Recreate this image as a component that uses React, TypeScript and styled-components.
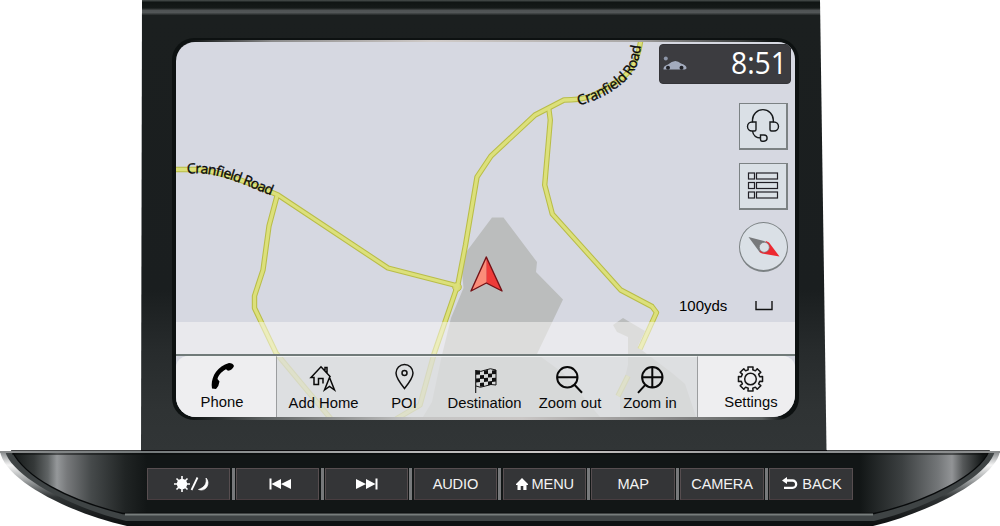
import React from "react";
import styled, { createGlobalStyle } from "styled-components";

const GlobalStyle = createGlobalStyle`
  body { margin: 0; background: #fff; font-family: "Liberation Sans", Arial, sans-serif; overflow: hidden; }
  *, *::before { box-sizing: border-box; }
  svg { display: block; }
`;

const Device = styled.main`
  width: 1000px;
  height: 526px;
  display: grid;
  grid-template-rows: 450px 76px;
`;

const Housing = styled.section`
  width: 686px;
  margin-left: 141px;
  padding: 38px 28px 0 31px;
  clip-path: polygon(1px 0, 679px 0, 685.5px 450px, 0 450px);
  background: linear-gradient(
    #4c5250 0, #2a302f 1.2px, #101514 2.5px, #151a19 8px, #4f5354 10.5px,
    #525657 12.5px, #1b1f1f 15.5px, #1a1e1f 290px, #272b2c 350px, #2f3334 410px, #313536 450px
  );
`;

const Bezel = styled.div`
  width: 627px;
  padding: 4px;
  height: 382px;
  border-radius: 22px;
  background:
    linear-gradient(90deg, transparent 18px, #8b8b8b 100px, #d0cbc8 260px, #aaa8a7 460px, #3a3d3d 570px, transparent 600px) 0 1.5px / 100% 2.5px no-repeat,
    linear-gradient(90deg, transparent 18px, #5c6060 90px, #c4c4c4 240px, #c9c6c5 350px, #888 500px, #5c6060 590px, transparent 612px) 0 378.5px / 100% 3px no-repeat,
    #0d1111;
`;

const Screen = styled.div`
  width: 619px;
  height: 375px;
  display: grid;
  border-radius: 19px 17px 22px 20px;
  overflow: hidden;
  background: #d6d8e1;
`;

const MapLayer = styled.svg`
  grid-area: 1 / 1;
`;

const Overlay = styled.div`
  grid-area: 1 / 1;
  z-index: 1;
  display: grid;
  grid-template-rows: 280px 32px 63px;
`;

const Controls = styled.div`
  display: flex;
  flex-direction: column;
  align-items: flex-end;
  padding: 2px 7px 0 0;
`;

const StatusBar = styled.div`
  width: 132px;
  height: 40px;
  margin-right: -3px;
  padding: 0 3px;
  display: flex;
  align-items: center;
  justify-content: space-between;
  border-radius: 4px;
  background: #3c3c40;
  border: 1px solid #343438;
`;

const MapButton = styled.div<{ $round?: boolean; $top: number; $h: number }>`
  width: 49px;
  height: ${(p) => p.$h}px;
  margin-top: ${(p) => p.$top}px;
  display: grid;
  place-items: center;
  background: #dae0e6;
  border: 1px solid #7c8284;
  border-right-width: ${(p) => (p.$round ? 1 : 2)}px;
  border-bottom-width: 2px;
  border-radius: ${(p) => (p.$round ? "50%" : "0")};
`;

const Scale = styled.div`
  width: 94px;
  margin: 24px 15px 0 0;
  display: flex;
  justify-content: space-between;
  align-items: center;
  font-size: 15px;
  line-height: 20px;
`;

const Haze = styled.div`
  background: rgba(251, 250, 247, 0.52);
`;

const NavBar = styled.nav`
  display: grid;
  grid-template-columns: 101px 93px 68px 93px 78px 88px 98px;
  border-top: 2px solid #707a79;
`;

const NavItem = styled.div<{ $edge?: "left" | "right"; $dx?: number }>`
  display: flex;
  flex-direction: column;
  align-items: center;
  padding: ${(p) => (p.$edge ? 4 : 5)}px ${(p) => (p.$dx && p.$dx < 0 ? -p.$dx : 0)}px 0 ${(p) => (p.$dx && p.$dx > 0 ? p.$dx : 0)}px;
  font-size: 14.8px;
  line-height: 18px;
  color: #080808;
  white-space: nowrap;
  background: ${(p) => (p.$edge ? "#eeeef0" : "rgba(223, 224, 224, 0.78)")};
  border-top: 1px solid #f0f2f2;
  border-right: ${(p) => (p.$edge === "left" ? "1.5px solid #9b9d9f" : "0")};
  border-left: ${(p) => (p.$edge === "right" ? "1.5px solid #9b9d9f" : "0")};
  border-radius: ${(p) => (p.$edge === "left" ? "12px 0 0 0" : p.$edge === "right" ? "0 12px 0 0" : "0")};
  svg { height: 32px; width: 40px; flex: none; overflow: visible; }
`;

const Base = styled.section`
  display: grid;
`;

const BaseShape = styled.svg`
  grid-area: 1 / 1;
`;

const KeyRow = styled.div`
  grid-area: 1 / 1;
  z-index: 1;
  display: flex;
  gap: 1.25px;
  padding: 18px 0 0 147px;
  align-self: start;
`;

const Key = styled.div<{ $shift?: number }>`
  width: 83.4px;
  height: 32px;
  flex: none;
  display: flex;
  align-items: center;
  justify-content: center;
  gap: 4px;
  padding-left: ${(p) => p.$shift ?? 0}px;
  font-size: 14.6px;
  color: #f3f3f3;
  white-space: nowrap;
  background: #343537;
  border: 1px solid #574e50;
  border-bottom-color: #483d40;
`;

const KeyText = styled.span`
  display: inline-block;
  letter-spacing: -0.15px;
`;

const Divider = styled.div`
  width: 3px;
  height: 32px;
  flex: none;
  background: #77797b;
`;

const roads = [
  "M170 169.5H198Q225 172 278 195L388 268L458 286",
  "M277 196L269 226L263 270L254.500 296V308L276 353L331 419",
  "M641 38C638 66 626 78 611 85C594 96 586 100 564 100L535 115L491 156L477 177L465.500 245L458 284L456 290L434 354L420 405L396 419",
  "M548.700 108L550.300 120L544.700 185L552.300 214L620.700 290L652 306.500L656.500 312.500L640 349",
  "M628 376L618 396",
];

const RoadMap = () => (
  <MapLayer width="619" height="375" viewBox="176 42 619 375" fill="none">
    <g fill="#bbbdbd">
      <path d="M492 217.500H503.500L537 262L536 272L563 299.500L537 354L563 373L600 417H423L432 402L442 355L451 318L463.500 288L461 259Z" />
      <path d="M613 325L623 318L645 331L638 346L643 351L672 373L685 384L696 417H620V398L628 365V337L617 332Z" />
    </g>
    <g stroke="#b9bd48" strokeWidth="5.400" strokeLinejoin="round">
      {roads.map((d) => <path key={d} d={d} />)}
    </g>
    <circle cx="457" cy="287" r="4.300" fill="#d9dc75" stroke="#b9bd48" />
    <g stroke="#dce07b" strokeWidth="3.300" strokeLinejoin="round">
      {roads.map((d) => <path key={d} d={d} />)}
    </g>
    <defs>
      <path id="west" d="M187 173.500C206 172 222 176 240 183L300 207" />
      <path id="north" d="M578.500 105.500C600 99.500 613 92 625 81C637 72 640.500 59 642 30" />
    </defs>
    <g fill="#090909" stroke="#090909" strokeWidth=".35" fontFamily="'Open Sans', 'Noto Sans', sans-serif" fontSize="14">
      <text><textPath href="#west" textLength="88" lengthAdjust="spacing">Cranfield Road</textPath></text>
      <text><textPath href="#north" textLength="93" lengthAdjust="spacing">Cranfield Road</textPath></text>
    </g>
    <g strokeLinejoin="round">
      <path d="M486.300 257L471 291L486.300 283Z" fill="#fb8d79" />
      <path d="M486.300 257L502 291L486.300 283Z" fill="#ef3b39" />
      <path d="M486.300 257L471 291L486.300 283L502 291Z" stroke="#741116" strokeWidth="1.400" />
    </g>
  </MapLayer>
);

const CarIcon = () => (
  <svg width="24" height="20" viewBox="0 0 24 20">
    <circle cx="2.800" cy="4.500" r="2" fill="#8d96a8" />
    <path d="M.5 15.500Q0 12 5 10.500Q12 4 18 9.500Q24 11.500 23.500 14.500L22 15.500Z" fill="#a3abbd" />
    <circle cx="5" cy="13.800" r="2" fill="#202126" />
    <circle cx="18.500" cy="13.800" r="2" fill="#202126" />
  </svg>
);

const Clock = () => (
  <svg width="58" height="38" viewBox="0 0 58 38" overflow="visible">
    <text x="2" y="29" textLength="56" lengthAdjust="spacingAndGlyphs" fill="#fff" fontFamily="'Open Sans', 'Noto Sans', sans-serif" fontSize="30.500">8:51</text>
  </svg>
);

const HeadsetIcon = () => (
  <svg width="34" height="36" viewBox="0 0 34 36" fill="none" stroke="#171a1c" strokeWidth="1.400">
    <path d="M6.500 14.500V12A10.400 10.400 0 0 1 27.300 12V14.500" />
    <path d="M10 14H6A4.500 4.500 0 0 0 6 23H8.500Q10 23 10 21.500ZM24 14H28A4.500 4.500 0 0 1 28 23H25.500Q24 23 24 21.500Z" />
    <path d="M6.500 23Q7.500 30 15 30M14.500 27H18A3 3 0 0 1 18 33.200H16Q14.500 33 14.500 31.500Z" />
  </svg>
);

const ListIcon = () => (
  <svg width="32" height="28" viewBox="0 0 32 28" fill="none" stroke="#211f26" strokeWidth="1.200">
    {[1, 10.5, 20].map((y) => (
      <g key={y}><rect x="1.500" y={y} width="6" height="6" /><rect x="9.500" y={y} width="21" height="6" /></g>
    ))}
  </svg>
);

const CompassIcon = () => (
  <svg width="34" height="24" viewBox="0 0 34 24">
    <path d="M1.500 2L17 6L21 8.500L15 18L12.500 17Z" fill="#77797b" />
    <path d="M32.500 21.500L15 18.500L12.500 17L19 6L22 7.500Z" fill="#ed2830" />
    <circle cx="17.300" cy="12.300" r="5" fill="#dae0e6" stroke="#77797b" strokeWidth=".7" />
  </svg>
);

const PhoneIcon = () => (
  <svg viewBox="0 0 40 32">
    <path d="M10 27.500C8.500 18.500 13 8 23 3.500L27 2Q31 2 32 5Q30.500 9 26 9.800L24 8.200C19 11 16.500 14 15.500 18L17.500 20.500Q17 25 14 28Z" fill="#000" />
  </svg>
);

const HomeIcon = () => (
  <svg viewBox="0 0 40 32" fill="none" stroke="#090909" strokeWidth="1.500">
    <path d="M19 21.500V16.500H14.500V22.500H10V15.500H7L17 4.800L26.500 15M21 8.500V5.500H23V11" />
    <path d="M25.500 15.500L20.500 28L25.500 24.500L30.500 28Z" />
  </svg>
);

const PinIcon = () => (
  <svg viewBox="0 0 40 32" fill="none" stroke="#111" strokeWidth="1.500">
    <path d="M20.500 26.500Q12 16 12 11A8.500 8.500 0 0 1 29 11Q29 16 20.500 26.500Z" />
    <circle cx="20.500" cy="11" r="2.500" />
  </svg>
);

const flagCells = Array.from({ length: 20 }, (_, i) => ({ c: i % 5, r: Math.floor(i / 5) }));

const FlagIcon = () => (
  <svg viewBox="0 0 40 32" fill="none" stroke="#151515">
    <g fill="#111" stroke="none">
      {flagCells.filter(({ c, r }) => (c + r) % 2 === 0).map(({ c, r }) => (
        <path key={`${c}-${r}`} d={`M${11 + c * 4} ${9 + r * 3.8 + [0, 0.5, -0.5, -1, -0.5][c]}l4 -.400v3.800l-4 .400z`} />
      ))}
    </g>
    <path d="M11 8.500Q16 10.500 20.500 8T31 8V23Q26 21.500 20.500 24T11 24" />
    <path d="M10.700 8V31" strokeWidth="1.100" />
  </svg>
);

const ZoomIcon = ({ plus = false }: { plus?: boolean }) => (
  <svg viewBox="0 0 40 32" fill="none" stroke="#080808" strokeWidth="2">
    {plus ? (
      <path d="M32.500 15.300A10.200 10.200 0 1 1 12.100 15.300A10.200 10.200 0 1 1 32.500 15.300M15.300 22.800L8 30.800M12.500 15.300H32.500M22.300 5.300V25.300" />
    ) : (
      <path d="M27.500 15.300A10.200 10.200 0 1 1 7.100 15.300A10.200 10.200 0 1 1 27.500 15.300M24.500 22.800L32 30.800M7.500 15.300H27.500" />
    )}
  </svg>
);

const teeth = Array.from({ length: 8 }, (_, i) => {
  const at = (deg: number, r: number) => {
    const a = ((i * 45 + deg) * Math.PI) / 180;
    return `${(19.5 + r * Math.cos(a)).toFixed(2)} ${(18 + r * Math.sin(a)).toFixed(2)}`;
  };
  return `${at(-14, 9.5)}L${at(-12, 12.3)}L${at(12, 12.3)}L${at(14, 9.5)}`;
});

const GearIcon = () => (
  <svg viewBox="0 0 40 32" fill="none" stroke="#161616" strokeWidth="1.500" strokeLinejoin="round">
    <path d={`M${teeth.join("L")}Z`} />
    <circle cx="19.500" cy="18" r="5.800" />
  </svg>
);

const DayNightIcon = () => (
  <svg width="37" height="18" viewBox="0 0 37 18" fill="#fff" stroke="#fff">
    <circle cx="9" cy="9" r="5.200" stroke="none" />
    <path d="M9 1V17M1 9H17M3.500 3.500L14.500 14.500M14.500 3.500L3.500 14.500" strokeWidth="1.600" />
    <path d="M18.500 15L24.500 2.500" strokeWidth="1.800" />
    <path d="M33 3C38 8 33 17.500 25.500 14.500C32 12.500 34 8 33 3Z" strokeWidth=".7" />
  </svg>
);

const SkipIcon = ({ forward = false }: { forward?: boolean }) => (
  <svg width="22" height="12" viewBox="0 0 22 12" fill="#fff">
    <path d={forward ? "M0 1L10 6L0 11ZM10 1L19.500 6L10 11ZM19.500 .5H21.500V11.500H19.500Z" : "M22 1L12 6L22 11ZM12 1L2.500 6L12 11ZM.5 .5H2.500V11.500H.5Z"} />
  </svg>
);

const HouseGlyph = () => (
  <svg width="12" height="12" viewBox="0 0 12 12" fill="#fff">
    <path d="M6 0L12 6V7H10.500V12H7.300V8H4.700V12H1.500V7H0V6L6 0Z" />
  </svg>
);

const BackGlyph = () => (
  <svg width="16" height="14" viewBox="0 0 16 14" fill="none">
    <path d="M4 3.500H10.500A3.600 3.600 0 0 1 10.500 10.800H2" stroke="#fff" strokeWidth="2.300" />
    <path d="M0 3.500L5 0V7Z" fill="#fff" />
  </svg>
);

const Console = () => (
  <BaseShape width="1000" height="76" viewBox="0 450 1000 76">
    <defs>
      <linearGradient id="gloss" gradientUnits="userSpaceOnUse" x1="0" y1="0" x2="1000" y2="0">
        <stop offset=".012" stopColor="#121616" />
        <stop offset=".034" stopColor="#353939" />
        <stop offset=".048" stopColor="#606465" />
        <stop offset=".057" stopColor="#95989a" />
        <stop offset=".067" stopColor="#77797b" />
        <stop offset=".091" stopColor="#464a4b" />
        <stop offset=".125" stopColor="#202424" />
        <stop offset=".147" stopColor="#121616" />
        <stop offset=".86" stopColor="#121616" />
        <stop offset=".902" stopColor="#3c4041" />
        <stop offset=".938" stopColor="#737678" />
        <stop offset=".952" stopColor="#929496" />
        <stop offset=".963" stopColor="#555859" />
        <stop offset=".983" stopColor="#121616" />
      </linearGradient>
      <linearGradient id="rim" gradientUnits="userSpaceOnUse" x1="0" y1="450" x2="0" y2="526">
        <stop offset="0" stopColor="#777b7d" />
        <stop offset=".2" stopColor="#f5f5f5" />
        <stop offset=".4" stopColor="#a1a4a5" />
        <stop offset=".62" stopColor="#303435" />
        <stop offset="1" stopColor="#0c0e0f" />
      </linearGradient>
      <linearGradient id="edge" x1="0" x2="1">
        <stop offset="0" stopColor="#8b8d8e" />
        <stop offset=".15" stopColor="#74797a" />
        <stop offset=".42" stopColor="#b9b8b8" />
        <stop offset=".55" stopColor="#cbc6c5" />
        <stop offset=".8" stopColor="#8d8f90" />
        <stop offset="1" stopColor="#8b8d8e" />
      </linearGradient>
    </defs>
    <path d="M141 449H827V452H141Z" fill="#1d1719" />
    <path d="M0 451H1000C996 478 931 512 873 526H127C69 513 4 480 0 451Z" fill="url(#rim)" />
    <path d="M5 451H995C988 477 928 508 874 521H126C72 508 12 477 5 451Z" fill="#3f4445" />
    <path d="M125 521H875L858 526H142Z" fill="#0e1112" />
    <path d="M12 451H989C979 475 927 502 874 513.500H123C67 500 25 477 12 451Z" fill="url(#gloss)" stroke="#080a0b" strokeWidth="1.300" />
    <path d="M125 514.500H873" stroke="#777d7c" strokeWidth="2" />
    <rect y="451" width="1000" height="2" fill="url(#edge)" />
    <path d="M12 454H988" stroke="#090b0b" strokeWidth="1" />
  </BaseShape>
);

const keys: { label: React.ReactNode; shift?: number }[] = [
  { label: <DayNightIcon />, shift: 5 },
  { label: <SkipIcon />, shift: 4 },
  { label: <SkipIcon forward />, shift: 2 },
  { label: <KeyText>AUDIO</KeyText> },
  { label: <><HouseGlyph /><KeyText>MENU</KeyText></>, shift: 1 },
  { label: <KeyText>MAP</KeyText> },
  { label: <KeyText>CAMERA</KeyText> },
  { label: <><BackGlyph /><KeyText>BACK</KeyText></>, shift: 2 },
];

export default function App() {
  return (
    <>
      <GlobalStyle />
      <Device>
        <Housing>
          <Bezel>
            <Screen>
              <RoadMap />
              <Overlay>
                <Controls>
                  <StatusBar><CarIcon /><Clock /></StatusBar>
                  <MapButton $top={19} $h={47}><HeadsetIcon /></MapButton>
                  <MapButton $top={13} $h={47}><ListIcon /></MapButton>
                  <MapButton $round $top={12} $h={50}><CompassIcon /></MapButton>
                  <Scale>
                    <span>100yds</span>
                    <svg width="18" height="10" viewBox="0 0 18 10"><path d="M1 0V8.500H17V0" fill="none" stroke="#111" strokeWidth="1.400" /></svg>
                  </Scale>
                </Controls>
                <Haze />
                <NavBar>
                  <NavItem $edge="left" $dx={-8}><PhoneIcon />Phone</NavItem>
                  <NavItem><HomeIcon />Add Home</NavItem>
                  <NavItem><PinIcon />POI</NavItem>
                  <NavItem><FlagIcon />Destination</NavItem>
                  <NavItem><ZoomIcon />Zoom out</NavItem>
                  <NavItem $dx={-6}><ZoomIcon plus />Zoom in</NavItem>
                  <NavItem $edge="right" $dx={9}><GearIcon />Settings</NavItem>
                </NavBar>
              </Overlay>
            </Screen>
          </Bezel>
        </Housing>
        <Base>
          <Console />
          <KeyRow>
            {keys.map(({ label, shift }, i) => (
              <React.Fragment key={i}>
                {i > 0 && <Divider />}
                <Key $shift={shift}>{label}</Key>
              </React.Fragment>
            ))}
          </KeyRow>
        </Base>
      </Device>
    </>
  );
}
